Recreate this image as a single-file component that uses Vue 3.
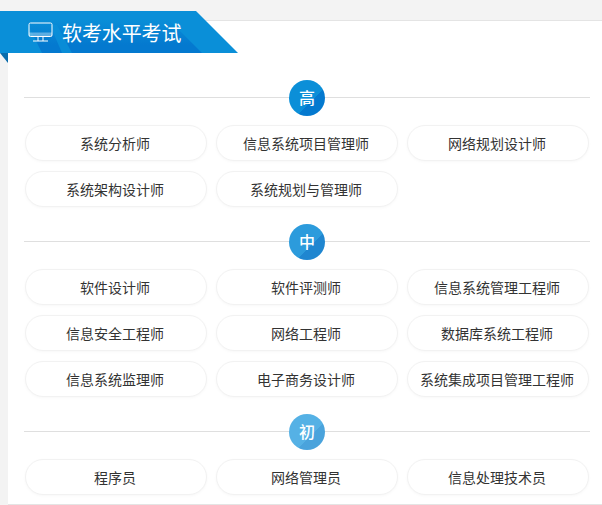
<script setup>
const sections = [
  { level: '高', tone: 'high', items: ['系统分析师', '信息系统项目管理师', '网络规划设计师', '系统架构设计师', '系统规划与管理师'] },
  { level: '中', tone: 'mid', items: ['软件设计师', '软件评测师', '信息系统管理工程师', '信息安全工程师', '网络工程师', '数据库系统工程师', '信息系统监理师', '电子商务设计师', '系统集成项目管理工程师'] },
  { level: '初', tone: 'low', items: ['程序员', '网络管理员', '信息处理技术员'] },
]
</script>

<template>
  <div class="page">
    <div class="card">
      <div class="ribbon">
        <svg class="ribbon-bg" width="238" height="42" viewBox="0 0 238 42">
          <defs>
            <linearGradient id="ribbonFade" x1="0" y1="8" x2="0" y2="34" gradientUnits="userSpaceOnUse">
              <stop offset="0" stop-color="#0479cf" stop-opacity="0" />
              <stop offset="1" stop-color="#0479cf" />
            </linearGradient>
          </defs>
          <polygon points="0,0 196,0 238,42 0,42" fill="#0a8fd8" />
          <polygon points="24,6 166,6 202,42 42,42" fill="url(#ribbonFade)" />
          <polygon points="50,14 57,14 72,42 62,42" fill="#0a8fd8" opacity="0.85" />
        </svg>
        <svg class="screen" width="26" height="20" viewBox="0 0 26 20" fill="none" stroke="#fff" stroke-width="1">
          <rect x="1" y="10.5" width="23" height="4" fill="#fff" fill-opacity="0.35" stroke="none" />
          <rect x="1" y="1" width="23" height="13.5" rx="1.5" />
          <path d="M5 19H20M10 15V19M15 15V19" />
        </svg>
        <span class="ribbon-title">软考水平考试</span>
      </div>
      <div class="fold"></div>
      <section v-for="s in sections" :key="s.level" class="section">
        <div class="divider">
          <span class="badge" :class="s.tone">{{ s.level }}</span>
        </div>
        <div class="grid">
          <a v-for="item in s.items" :key="item" class="pill">{{ item }}</a>
        </div>
      </section>
    </div>
  </div>
</template>

<style>
html, body { margin: 0; background: #f3f3f3; }
</style>

<style scoped>
.page {
  width: 602px;
  height: 505px;
  overflow: hidden;
  padding: 20px 0 0 8px;
  box-sizing: border-box;
  background: #f3f3f3;
  font-family: "Open Sans", "Noto Sans CJK SC", sans-serif;
}
.card {
  background: #fff;
  border-top: 1px solid #e4e4e4;
  border-bottom: 1px solid #e4e4e4;
  height: 485px;
  box-sizing: border-box;
}
.ribbon {
  position: relative;
  width: 238px;
  height: 42px;
  margin: -10px 0 0 -8px;
  display: flex;
  align-items: center;
  padding-left: 28px;
  box-sizing: border-box;
}
.ribbon-bg { position: absolute; left: 0; top: 0; }
.screen { position: relative; margin-right: 8px; }
.ribbon-title {
  position: relative;
  color: #fff;
  font-size: 20px;
  letter-spacing: -0.1px;
}
.fold {
  width: 0;
  height: 0;
  margin-left: -8px;
  border-top: 10px solid #0a6cab;
  border-left: 8px solid transparent;
}
.section { padding: 0 12px 0 16px; }
.divider {
  height: 1px;
  background: #dfdfdf;
  margin-top: 34px;
  display: flex;
  justify-content: center;
  align-items: center;
}
.badge {
  width: 36px;
  height: 36px;
  flex: none;
  border-radius: 50%;
  color: #fff;
  font-size: 16px;
  font-weight: 500;
  line-height: 36px;
  text-align: center;
}
.high { background: linear-gradient(135deg, #0b8fd8 60%, #0479cf 60%); }
.mid { background: linear-gradient(135deg, #2c9bdc 60%, #1f86d0 60%); }
.low { background: linear-gradient(135deg, #55b1e5 60%, #4aa3dc 60%); }
.grid {
  display: grid;
  grid-template-columns: repeat(3, 182px);
  column-gap: 9px;
  row-gap: 10px;
  margin: 27px 0 0 1px;
}
.pill {
  height: 36px;
  line-height: 36px;
  box-sizing: border-box;
  padding-right: 2px;
  border: 1px solid #f2f2f2;
  border-radius: 18px;
  box-shadow: 0 1px 3px rgba(0,0,0,0.03);
  text-align: center;
  font-size: 14px;
  color: #333;
  background: #fff;
}
</style>
